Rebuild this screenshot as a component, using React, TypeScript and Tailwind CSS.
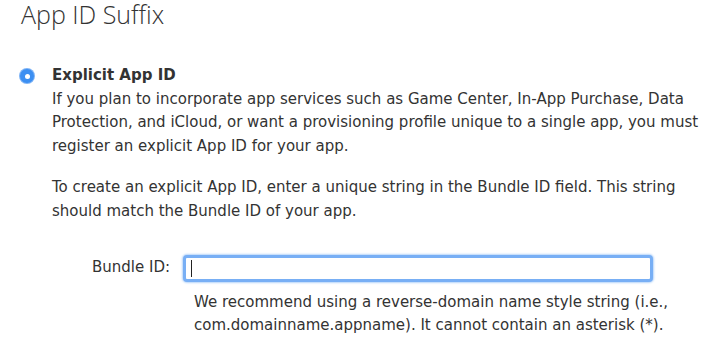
export default function App() {
  return (
    <div
      className="w-[720px] h-[364px] bg-white text-[#333] overflow-hidden"
      style={{ fontFamily: '"DejaVu Sans", "Liberation Sans", sans-serif' }}
    >
      <h1
        className="pl-[21px] pt-[1px] text-[25px] leading-[27px] font-light text-[#333]"
        style={{ fontFamily: '"Open Sans", "Liberation Sans", sans-serif' }}
      >
        App ID Suffix
      </h1>

      <div className="mt-[36px] flex items-start pl-[20px]">
        <span className="mt-[5px] w-[14px] h-[14px] rounded-full bg-[#3c8ff2] shadow-[0_0_0_1px_#7fb4f6] flex items-center justify-center shrink-0">
          <span className="w-[5px] h-[5px] rounded-full bg-white" />
        </span>
        <div className="ml-[18px] w-[650px] text-[15px] leading-[23.6px]">
          <div className="font-bold">Explicit App ID</div>
          <p>
            If you plan to incorporate app services such as Game Center, In-App Purchase, Data
            Protection, and iCloud, or want a provisioning profile unique to a single app, you must
            register an explicit App ID for your app.
          </p>
          <p className="mt-[18px]">
            To create an explicit App ID, enter a unique string in the Bundle ID field. This string
            should match the Bundle ID of your app.
          </p>

          <div className="mt-[31px] flex items-center">
            <label className="w-[131px] text-right pr-[13px] shrink-0">Bundle ID:</label>
            <div className="w-[470px] h-[27px] rounded-[4px] border-[3px] border-[#78aff5] shadow-[0_0_2px_1px_#b6d5fa] bg-white flex items-center px-[5px]">
              <span className="w-px h-[17px] bg-[#222]" />
            </div>
          </div>
          <p className="mt-[9px] ml-[142px]">
            We recommend using a reverse-domain name style string (i.e.,
            <br />
            com.domainname.appname). It cannot contain an asterisk (*).
          </p>
        </div>
      </div>
    </div>
  )
}
